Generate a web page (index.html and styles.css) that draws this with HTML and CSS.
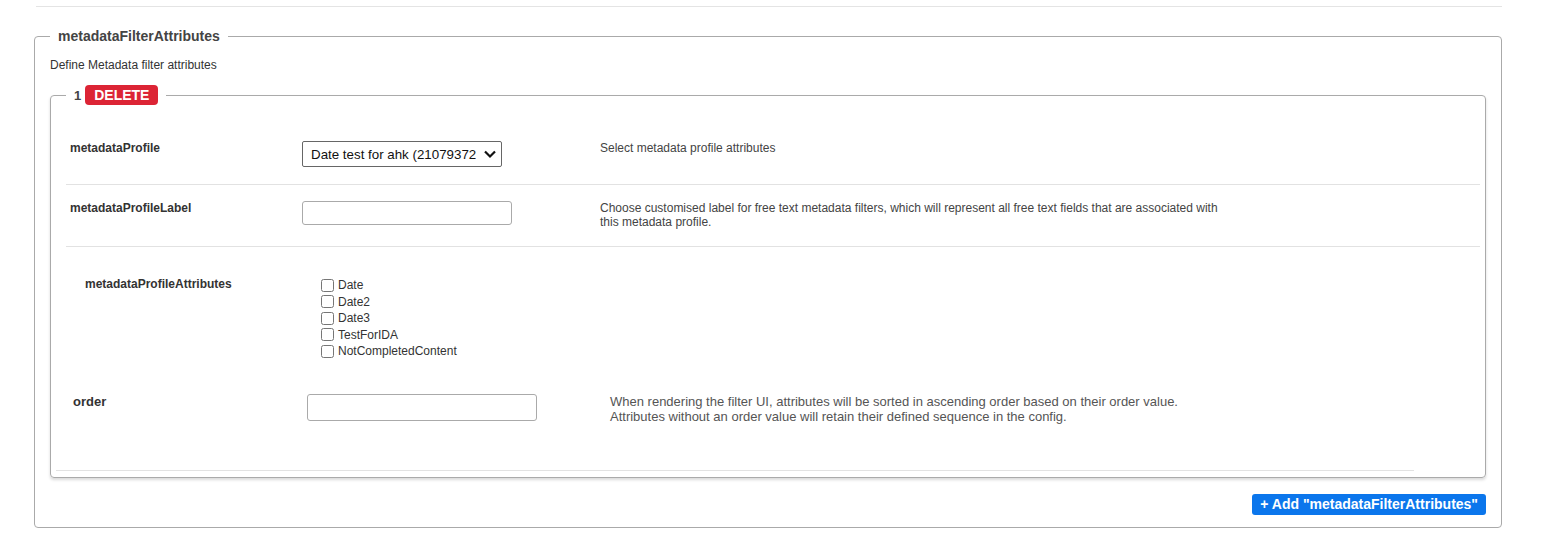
FILE: index.html
```html
<!DOCTYPE html>
<html lang="en">
<head>
    <meta charset="UTF-8">
    <meta name="viewport" content="width=device-width, initial-scale=1.0">
    <title>metadataFilterAttributes</title>
    <link rel="stylesheet" href="styles.css">
</head>
<body>

    <div class="page">
        <div class="top-rule"></div>

        <!-- GROUP -->
        <fieldset class="group">
            <legend class="group-title">metadataFilterAttributes</legend>
            <p class="group-desc">Define Metadata filter attributes</p>

            <!-- ITEM 1 -->
            <fieldset class="item">
                <legend class="item-title">
                    <span class="item-index">1</span>
                    <button class="delete-button">DELETE</button>
                </legend>

                <div class="field-row">
                    <label class="field-label">metadataProfile</label>
                    <div class="field-control">
                        <span class="select-wrap">
                            <select class="profile-select">
                                <option>Date test for ahk (21079372)</option>
                            </select>
                            <svg class="select-chevron" width="14" height="10" viewBox="0 0 14 10">
                                <path d="M2 2.5 L7 7.5 L12 2.5" fill="none" stroke="#111" stroke-width="2.2"/>
                            </svg>
                        </span>
                    </div>
                    <div class="field-help">Select metadata profile attributes</div>
                </div>

                <div class="field-row">
                    <label class="field-label">metadataProfileLabel</label>
                    <div class="field-control">
                        <input type="text" class="text-input">
                    </div>
                    <div class="field-help">Choose customised label for free text metadata filters, which will represent all free text fields that are associated with this metadata profile.</div>
                </div>

                <div class="field-row attr-row">
                    <label class="field-label">metadataProfileAttributes</label>
                    <div class="field-control check-list">
                        <label class="check-item"><input type="checkbox"> Date</label>
                        <label class="check-item"><input type="checkbox"> Date2</label>
                        <label class="check-item"><input type="checkbox"> Date3</label>
                        <label class="check-item"><input type="checkbox"> TestForIDA</label>
                        <label class="check-item"><input type="checkbox"> NotCompletedContent</label>
                    </div>
                </div>

                <div class="field-row order-row">
                    <label class="field-label">order</label>
                    <div class="field-control">
                        <input type="text" class="text-input order-input">
                    </div>
                    <div class="field-help">When rendering the filter UI, attributes will be sorted in ascending order based on their order value. Attributes without an order value will retain their defined sequence in the config.</div>
                </div>
            </fieldset>

            <div class="group-actions">
                <button class="add-button">+ Add "metadataFilterAttributes"</button>
            </div>
        </fieldset>
    </div>

</body>
</html>
```

FILE: styles.css
```css
body {
    font-family: "Liberation Sans", Arial, sans-serif;
    margin: 0;
    background-color: #fff;
    color: #333;
}
.page {
    margin: 0 40px 0 34px;
    padding-top: 6px;
}
.top-rule {
    height: 1px;
    background-color: #e4e4e4;
    margin-left: 2px;
    margin-bottom: 21px;
}
fieldset {
    margin: 0;
    min-width: 0;
}
.group {
    border: 1px solid #aaa;
    border-radius: 4px;
    padding: 0 15px 12px 15px;
}
.group-title {
    font-size: 14px;
    font-weight: bold;
    color: #444;
    line-height: 16px;
    padding: 0 8px;
}
.group-desc {
    font-size: 12px;
    line-height: 14px;
    color: #333;
    margin: 14px 0 13px 0;
}
.item {
    border: 1px solid #aaa;
    border-radius: 4px;
    padding: 20px 5px 6px 15px;
    box-shadow: 0 2px 3px rgba(0, 0, 0, 0.15);
}
.item-title {
    padding: 0 8px;
    display: flex;
    align-items: center;
    gap: 4px;
}
.item-index {
    font-size: 13px;
    font-weight: bold;
    color: #444;
}
.delete-button {
    background-color: #dc2435;
    color: white;
    border: none;
    border-radius: 4px;
    font-family: "Liberation Sans", Arial, sans-serif;
    font-size: 14px;
    font-weight: bold;
    height: 20px;
    padding: 0 9px;
    cursor: pointer;
}
.field-row {
    display: grid;
    grid-template-columns: 232px 298px 630px;
    align-items: start;
    padding: 16px 0 17px 4px;
    border-bottom: 1px solid #e2e2e2;
}
.field-label {
    font-size: 12px;
    font-weight: bold;
    line-height: 14px;
    color: #333;
}
.field-help {
    font-size: 12px;
    line-height: 14px;
    color: #444;
}
.select-wrap {
    position: relative;
    display: inline-block;
}
.profile-select {
    appearance: none;
    width: 200px;
    height: 26px;
    font-family: "Liberation Sans", Arial, sans-serif;
    font-size: 13.33px;
    color: #111;
    border: 1px solid #666;
    border-radius: 2px;
    background-color: #fff;
    padding: 0 25px 0 8px;
    display: block;
}
.select-chevron {
    position: absolute;
    right: 5px;
    top: 8px;
    pointer-events: none;
}
.text-input {
    width: 210px;
    height: 24px;
    box-sizing: border-box;
    border: 1px solid #aaa;
    border-radius: 3px;
}
.attr-row {
    padding: 30px 0 0 19px;
    border-bottom: none;
}
.check-list {
    margin-left: 4px;
}
.check-item {
    display: flex;
    align-items: center;
    height: 16.5px;
    font-size: 12px;
    color: #333;
}
.check-item input {
    width: 13px;
    height: 13px;
    margin: 0 4px 0 0;
}
.order-row {
    grid-template-columns: 234px 303px 590px;
    margin: 0 66px 0 -10px;
    padding: 34px 0 46px 17px;
}
.order-row .field-label {
    font-size: 13px;
    line-height: 15px;
}
.order-row .field-help {
    font-size: 13px;
    line-height: 15px;
    color: #555;
}
.order-input {
    width: 230px;
    height: 27px;
}
.group-actions {
    display: flex;
    justify-content: flex-end;
    margin-top: 16px;
}
.add-button {
    background-color: #0b76ec;
    color: white;
    border: none;
    border-radius: 3px;
    font-family: "Liberation Sans", Arial, sans-serif;
    font-size: 14px;
    font-weight: bold;
    height: 21px;
    padding: 0 8px;
    cursor: pointer;
}
```
